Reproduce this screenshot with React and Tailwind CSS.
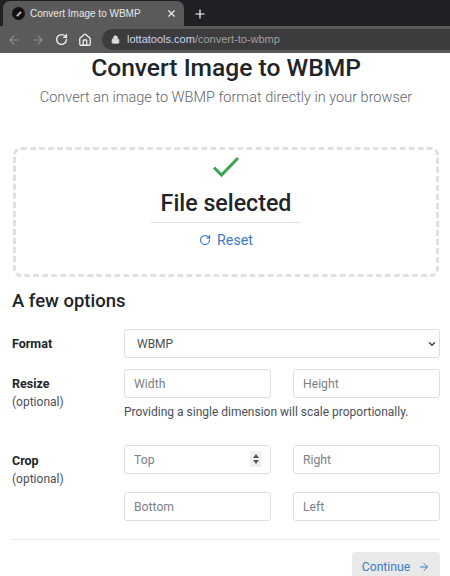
import React from 'react';
import { ArrowLeft, ArrowRight, RotateCw, Home, Lock, X, Plus, ChevronDown } from 'lucide-react';

const TextInput = ({ placeholder, spin }) => (
  <div className="relative w-[147px]">
    <input
      placeholder={placeholder}
      className="w-full h-[29px] px-[9px] text-[12.2px] text-[#495057] bg-white border border-[#dcdfe3] rounded-[3px] outline-none placeholder:text-[#7b8188]"
    />
    {spin && (
      <div className="absolute right-[10px] top-[6px] w-[11px] h-[16px] bg-[#efefef] flex flex-col items-center justify-center gap-[2px]">
        <div className="w-0 h-0 border-x-[3px] border-x-transparent border-b-[4px] border-b-[#555]"></div>
        <div className="w-0 h-0 border-x-[3px] border-x-transparent border-t-[4px] border-t-[#555]"></div>
      </div>
    )}
  </div>
);

const Label = ({ title, optional }) => (
  <div className="w-[112px] shrink-0 text-[12.5px] leading-[18px] text-[#212529]">
    <div className="font-bold">{title}</div>
    {optional && <div className="text-[12px] text-[#495057]">(optional)</div>}
  </div>
);

export default function App() {
  return (
    <div className="w-[450px] h-[576px] overflow-hidden bg-white font-['Roboto',sans-serif]">
      {/* browser chrome */}
      <div className="h-[26px] bg-[#202124] flex items-end pl-[3px]">
        <div className="w-[181px] h-[25px] bg-[#5a5a5a] rounded-t-[7px] flex items-center pl-[9px] pr-[7px] text-[10px] text-[#e8e8e8]">
          <div className="w-[13px] h-[13px] rounded-full bg-[#111] flex items-center justify-center mr-[5px]">
            <div className="w-[6px] h-[2px] bg-[#bbb] -rotate-45"></div>
          </div>
          <span className="flex-1 font-['Liberation_Sans',sans-serif]">Convert Image to WBMP</span>
          <X size={11} strokeWidth={2.5} color="#eee" />
        </div>
        <Plus size={14} strokeWidth={2} color="#fff" className="ml-[9px] mb-[5px]" />
      </div>
      <div className="h-[27px] bg-[#5a5a5a] flex items-center pl-[7px] gap-[10px]">
        <ArrowLeft size={14} color="#8c8c8c" />
        <ArrowRight size={14} color="#8c8c8c" />
        <RotateCw size={13} color="#f0f0f0" strokeWidth={2.5} />
        <Home size={14} color="#f0f0f0" strokeWidth={2.2} />
        <div className="flex-1 h-[21px] bg-[#3c3c3e] rounded-l-full flex items-center pl-[9px] text-[11px] font-['Liberation_Sans',sans-serif]">
          <Lock size={9} color="#ddd" fill="#ddd" className="mr-[7px]" />
          <span className="text-[#c8d4ee]">lottatools.com</span>
          <span className="text-[#a0a0a0]">/convert-to-wbmp</span>
        </div>
      </div>

      <div className="pl-3 pr-[10px]">
        <h1 className="text-[24.6px] leading-[30px] font-medium text-center text-[#212529]">Convert Image to WBMP</h1>
        <p className="text-[14.5px] leading-[22px] font-light text-center text-[#5f666d] mt-[4px]">Convert an image to WBMP format directly in your browser</p>

        <div className="mt-[38px] mx-[1px] h-[130px] border-[3px] border-dashed border-[#e0e0e0] rounded-[8px] flex flex-col items-center">
          <svg width="28" height="22" viewBox="0 0 28 22" fill="none" className="mt-[6px]">
            <path d="M2 11.5 L9.5 19 L26 2" stroke="#3aa655" strokeWidth="3" />
          </svg>
          <div className="text-[23.2px] leading-[32px] font-medium text-[#212529] mt-[9px]">File selected</div>
          <div className="w-[150px] border-t border-[#dee2e6] mt-[3px]"></div>
          <div className="flex items-center gap-[6px] text-[14.2px] leading-[20px] text-[#3b7cc4] mt-[7px]">
            <RotateCw size={12} strokeWidth={2.5} />
            Reset
          </div>
        </div>

        <h2 className="text-[18.5px] leading-[24px] font-medium text-[#212529] mt-[12px]">A few options</h2>

        <div className="flex items-center mt-[16px]">
          <Label title="Format" />
          <div className="relative flex-1">
            <select className="w-full h-[29px] pl-[12px] appearance-none text-[12px] text-[#495057] bg-white border border-[#dcdfe3] rounded-[3px] outline-none">
              <option>WBMP</option>
            </select>
            <ChevronDown size={10} strokeWidth={3.5} color="#444" className="absolute right-[3px] top-[10px]" />
          </div>
        </div>

        <div className="flex mt-[11px]">
          <div className="pt-[6px]"><Label title="Resize" optional /></div>
          <div>
            <div className="flex gap-[22px]">
              <TextInput placeholder="Width" />
              <TextInput placeholder="Height" />
            </div>
            <p className="text-[12px] leading-[18px] text-[#495057] mt-[5px]">Providing a single dimension will scale proportionally.</p>
          </div>
        </div>

        <div className="flex mt-[24px]">
          <div className="pt-[7px]"><Label title="Crop" optional /></div>
          <div className="flex flex-col gap-[18px]">
            <div className="flex gap-[22px]">
              <TextInput placeholder="Top" spin />
              <TextInput placeholder="Right" />
            </div>
            <div className="flex gap-[22px]">
              <TextInput placeholder="Bottom" />
              <TextInput placeholder="Left" />
            </div>
          </div>
        </div>

        <div className="border-t border-[#e8e8e8] mt-[18px]"></div>
        <div className="flex justify-end mt-[12px]">
          <div className="w-[88px] h-[30px] bg-[#e9e9e9] rounded-[3px] flex items-center justify-center gap-[8px] text-[12.2px] text-[#3b7cc4]">
            Continue
            <ArrowRight size={12} strokeWidth={2} />
          </div>
        </div>
      </div>
    </div>
  );
}
